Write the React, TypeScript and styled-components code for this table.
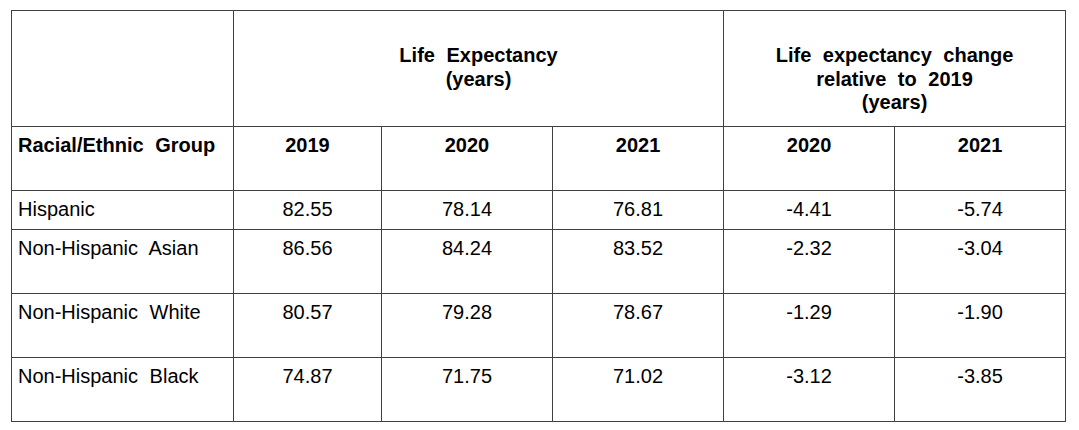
import React from "react";
import styled, { createGlobalStyle } from "styled-components";

const GlobalStyle = createGlobalStyle`
  html, body {
    margin: 0;
    padding: 0;
    background: #fff;
  }
  body {
    font-family: "Liberation Sans", Arial, sans-serif;
    color: #000;
  }
`;

const Page = styled.div`
  padding: 10px 0 0 11px;
`;

const Table = styled.table`
  border-collapse: collapse;
  table-layout: fixed;
  width: 1054px;
  font-size: 20px;
  line-height: 23px;
  word-spacing: 6px;
`;

const Row = styled.tr<{ $h: number }>`
  height: ${(p) => p.$h}px;
`;

const Cell = styled.td<{ $bold?: boolean; $left?: boolean; $pt?: number }>`
  border: 1px solid #404040;
  padding: ${(p) => p.$pt ?? 7}px ${(p) => (p.$left ? "4px" : "2px")} 0
    ${(p) => (p.$left ? "6px" : "2px")};
  vertical-align: top;
  text-align: ${(p) => (p.$left ? "left" : "center")};
  font-weight: ${(p) => (p.$bold ? 700 : 400)};
  white-space: nowrap;
`;

const HeadCell = styled(Cell)`
  line-height: 23.5px;
`;

const widths = [222, 148, 171, 171, 171, 171];

const rows = [
  { group: "Hispanic", vals: ["82.55", "78.14", "76.81", "-4.41", "-5.74"], h: 39 },
  { group: "Non-Hispanic Asian", vals: ["86.56", "84.24", "83.52", "-2.32", "-3.04"], h: 64 },
  { group: "Non-Hispanic White", vals: ["80.57", "79.28", "78.67", "-1.29", "-1.90"], h: 64 },
  { group: "Non-Hispanic Black", vals: ["74.87", "71.75", "71.02", "-3.12", "-3.85"], h: 64 },
];

export default function App() {
  return (
    <Page>
      <GlobalStyle />
      <Table>
        <colgroup>
          {widths.map((w, i) => (
            <col key={i} style={{ width: w }} />
          ))}
        </colgroup>
        <tbody>
          <Row $h={116}>
            <Cell />
            <HeadCell colSpan={3} $bold $pt={33}>
              Life Expectancy
              <br />
              (years)
            </HeadCell>
            <HeadCell colSpan={2} $bold $pt={33}>
              Life expectancy change
              <br />
              relative to 2019
              <br />
              (years)
            </HeadCell>
          </Row>
          <Row $h={64}>
            <Cell $bold $left>
              Racial/Ethnic Group
            </Cell>
            <Cell $bold>2019</Cell>
            <Cell $bold>2020</Cell>
            <Cell $bold>2021</Cell>
            <Cell $bold>2020</Cell>
            <Cell $bold>2021</Cell>
          </Row>
          {rows.map((r) => (
            <Row $h={r.h} key={r.group}>
              <Cell $left>{r.group}</Cell>
              {r.vals.map((v, i) => (
                <Cell key={i}>{v}</Cell>
              ))}
            </Row>
          ))}
        </tbody>
      </Table>
    </Page>
  );
}
